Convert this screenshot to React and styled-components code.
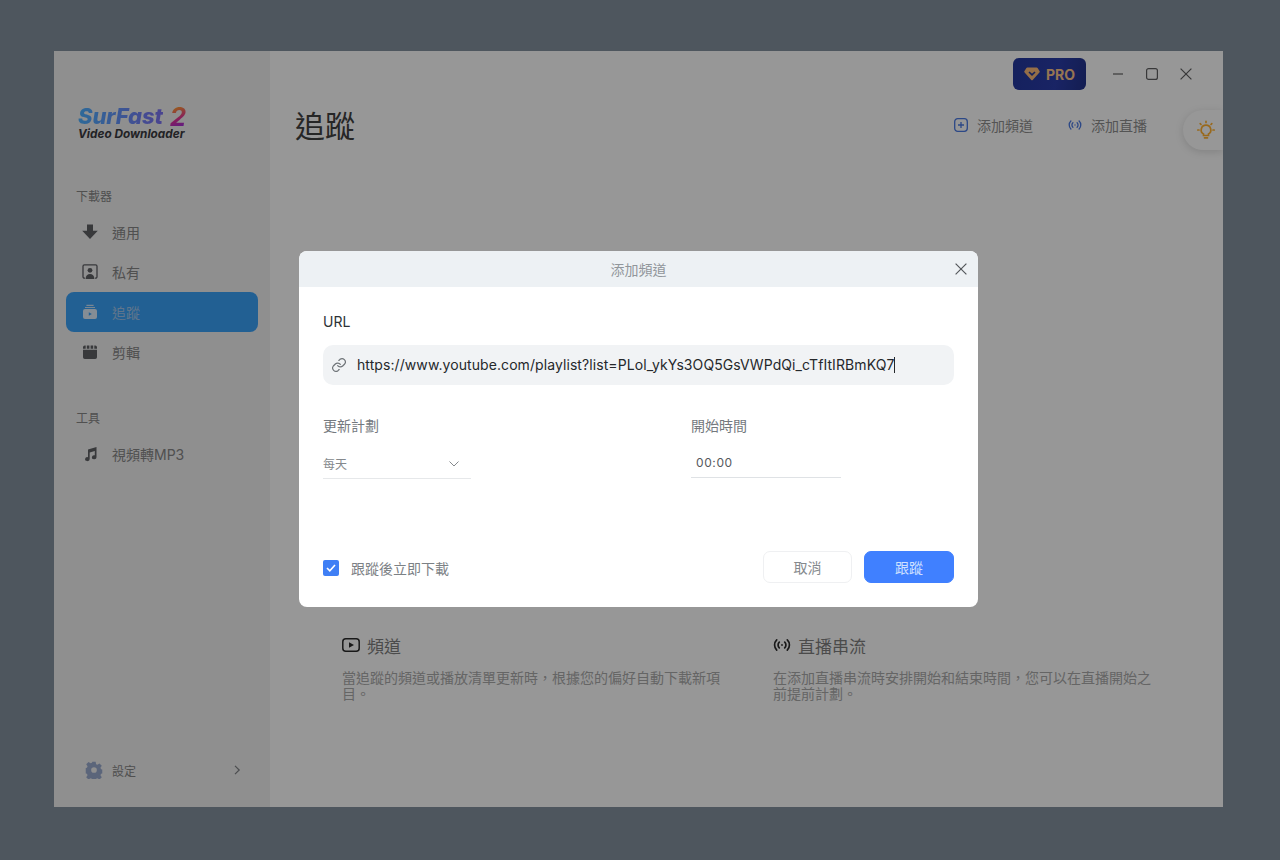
import React from "react";
import styled, { createGlobalStyle } from "styled-components";

const FONT = `Inter, "Noto Sans CJK TC", sans-serif`;

const Global = createGlobalStyle`
  html, body { margin: 0; padding: 0; background: #4e565e; }
  body { font-family: ${FONT}; }
  * { box-sizing: border-box; }
`;

const Page = styled.div`
  width: 1280px;
  height: 860px;
  padding: 51px 57px 53px 54px;
`;

const Win = styled.div`
  position: relative;
  display: flex;
  height: 100%;
  overflow: hidden;
  background: #fcfcfc;
`;

const Sidebar = styled.aside`
  width: 216px;
  flex: none;
  display: flex;
  flex-direction: column;
  padding: 0 12px;
  background: #eeeeef;
`;

const Logo = styled.div`
  margin: 54px 0 0 12px;
  height: 36px;
  font-style: italic;
  font-weight: 700;
  font-family: Inter, sans-serif;
`;

const LogoTop = styled.div`
  display: flex;
  align-items: center;
  gap: 7px;
  height: 23px;
  font-size: 22px;
  line-height: 23px;
  letter-spacing: -0.1px;
`;

const LogoName = styled.span`
  font-weight: 800;
  background: linear-gradient(90deg, #4cb0ff, #7c70f0);
  -webkit-background-clip: text;
  background-clip: text;
  color: transparent;
`;

const LogoTwo = styled.span`
  font-size: 26px;
  font-weight: 700;
  background: linear-gradient(160deg, #ff9a30 15%, #e0309a 60%, #8a30f0);
  -webkit-background-clip: text;
  background-clip: text;
  color: transparent;
`;

const LogoSub = styled.div`
  font-size: 11.8px;
  line-height: 13px;
  color: #3a3a3e;
`;

const SectionLabel = styled.div`
  margin: ${({ $top }) => $top}px 0 6px 10px;
  font-size: 12px;
  line-height: 18px;
  color: #858585;
`;

const NavItem = styled.div`
  display: flex;
  align-items: center;
  gap: 14px;
  height: 40px;
  padding-left: 16px;
  border-radius: 8px;
  font-size: 14px;
  color: ${({ $active }) => ($active ? "#a0c4ea" : "#858585")};
  background: ${({ $active }) => ($active ? "#39a0f5" : "transparent")};
  svg { flex: none; }
`;

const SettingsRow = styled.div`
  margin-top: auto;
  margin-bottom: 27px;
  display: flex;
  align-items: center;
  height: 20px;
  padding: 0 16px 0 19px;
  font-size: 12px;
  color: #858585;
`;

const SettingsLabel = styled.span`
  margin-left: 9px;
  flex: 1;
`;

const Main = styled.main`
  flex: 1;
  min-width: 0;
  display: flex;
  flex-direction: column;
`;

const TopBar = styled.div`
  display: flex;
  justify-content: flex-end;
  align-items: center;
  height: 32px;
  margin-top: 7px;
  padding-right: 28px;
`;

const ProButton = styled.div`
  display: flex;
  align-items: center;
  gap: 6px;
  width: 73px;
  height: 32px;
  padding-left: 11px;
  margin-right: 23px;
  border-radius: 6px;
  background: linear-gradient(100deg, #23379c, #2a3ca8 60%, #213288);
  font-size: 14px;
  font-weight: 700;
  color: #fbc389;
`;

const WinControl = styled.div`
  display: flex;
  justify-content: center;
  width: 18px;
  margin-left: ${({ $gap }) => $gap}px;
  color: #5e5e60;
`;

const Header = styled.div`
  display: flex;
  align-items: center;
  height: 40px;
  margin-top: 16px;
  padding: 0 76px 0 25px;
`;

const Title = styled.h1`
  flex: 1;
  margin: 0;
  font-size: 30px;
  line-height: 40px;
  font-weight: 400;
  color: #404040;
`;

const HeaderAction = styled.div`
  display: flex;
  align-items: center;
  gap: 9px;
  margin-left: ${({ $gap }) => $gap}px;
  padding-bottom: 2px;
  font-size: 14px;
  color: #8c8c8c;
`;

const BulbTab = styled.div`
  position: absolute;
  top: 59px;
  right: 0;
  display: flex;
  align-items: center;
  justify-content: flex-end;
  width: 40px;
  height: 40px;
  padding-right: 7px;
  border-radius: 20px 0 0 20px;
  background: #fcfcfc;
  box-shadow: 0 2px 8px rgba(0, 0, 0, 0.14);
`;

const Features = styled.div`
  margin-top: auto;
  display: grid;
  grid-template-columns: 382px 382px;
  column-gap: 49px;
  padding: 0 0 105px 72px;
`;

const FeatureHead = styled.div`
  display: flex;
  align-items: center;
  gap: 7px;
  height: 24px;
  font-size: 17px;
  color: #7e7e7e;
  margin-bottom: 13px;
`;

const FeatureText = styled.p`
  margin: 0;
  font-size: 14px;
  line-height: 16px;
  color: #a8a8a8;
`;

const Scrim = styled.div`
  position: absolute;
  inset: 0;
  display: flex;
  align-items: center;
  justify-content: center;
  background: rgba(0, 0, 0, 0.4);
`;

const Modal = styled.div`
  width: 679px;
  height: 356px;
  display: flex;
  flex-direction: column;
  overflow: hidden;
  border-radius: 8px;
  background: #fff;
`;

const ModalHead = styled.div`
  position: relative;
  flex: none;
  height: 36px;
  display: flex;
  align-items: center;
  justify-content: center;
  padding-bottom: 1px;
  background: #edf1f4;
  font-size: 14px;
  color: #91969b;
`;

const CloseBtn = styled.div`
  position: absolute;
  right: 11px;
  top: 12px;
  display: flex;
  color: #55595d;
`;

const ModalBody = styled.div`
  flex: 1;
  display: flex;
  flex-direction: column;
  padding: 26px 24px 24px;
`;

const UrlLabel = styled.div`
  font-size: 14px;
  line-height: 18px;
  color: #2e3236;
`;

const UrlField = styled.div`
  display: flex;
  align-items: center;
  gap: 10px;
  height: 40px;
  margin-top: 14px;
  padding: 0 0 1px 8px;
  border-radius: 10px;
  background: #f1f3f5;
  font-size: 14px;
  letter-spacing: 0.08px;
  color: #25282b;
  white-space: nowrap;
`;

const Caret = styled.span`
  display: inline-block;
  width: 1px;
  height: 16px;
  vertical-align: -3px;
  background: #25282b;
`;

const FieldRow = styled.div`
  display: grid;
  grid-template-columns: 148px 150px;
  column-gap: 220px;
  margin-top: 32px;
`;

const FieldLabel = styled.div`
  font-size: 14px;
  line-height: 18px;
  color: #74797e;
`;

const SelectBox = styled.div`
  display: flex;
  align-items: center;
  justify-content: space-between;
  height: 34px;
  margin-top: 10px;
  padding: 4px 12px 0 0;
  border-bottom: 1px solid #e6e8ea;
  font-size: 12px;
  color: #85898d;
`;

const TimeBox = styled.div`
  display: flex;
  align-items: center;
  height: 33px;
  margin-top: 10px;
  padding: 2px 0 0 5px;
  border-bottom: 1px solid #dfe2e5;
  font-size: 12px;
  letter-spacing: 0.6px;
  color: #55595d;
`;

const ModalFoot = styled.div`
  margin-top: auto;
  display: flex;
  align-items: center;
`;

const Check = styled.div`
  display: flex;
  align-items: center;
  justify-content: center;
  width: 16px;
  height: 16px;
  border-radius: 2px;
  margin-top: 2px;
  background: #3f7ff5;
`;

const CheckLabel = styled.span`
  flex: 1;
  margin-left: 12px;
  padding-top: 2px;
  font-size: 14px;
  color: #7c8185;
`;

const Btn = styled.div`
  display: flex;
  align-items: center;
  justify-content: center;
  height: 32px;
  width: ${({ $primary }) => ($primary ? 90 : 89)}px;
  margin-left: ${({ $primary }) => ($primary ? 12 : 0)}px;
  border-radius: 7px;
  font-size: 14px;
  color: ${({ $primary }) => ($primary ? "#cfe0ff" : "#85898d")};
  background: ${({ $primary }) => ($primary ? "#4080ff" : "#fff")};
  border: 1px solid ${({ $primary }) => ($primary ? "#4080ff" : "#eff0f2")};
`;

const Dark = "#5e5f63";

const ArrowIcon = () => (
  <svg width="16" height="16" viewBox="0 0 16 16" fill={Dark}>
    <path d="M5 .5h6v6.200h4.800L8 15 .2 6.700H5z" />
  </svg>
);

const PrivateIcon = () => (
  <svg width="16" height="16" viewBox="0 0 16 16" fill="none">
    <path d="M3 14.200H2.400A1.400 1.400 0 0 1 1 12.800V2.200A1.400 1.400 0 0 1 2.400.8h11.200A1.400 1.400 0 0 1 15 2.200v10.600a1.400 1.400 0 0 1-1.400 1.400H13" stroke={Dark} strokeWidth="1.300" />
    <circle cx="8" cy="6.300" r="2.400" fill={Dark} />
    <path d="M3.600 15c0-3 2-4.900 4.400-4.900s4.400 1.900 4.400 4.900z" fill={Dark} />
  </svg>
);

const FollowIcon = () => (
  <svg width="16" height="16" viewBox="0 0 16 16">
    <path d="M4.400.8h7.200v1.200H4.400zM3 2.900h10v1.200H3z" fill="#c8dff5" />
    <rect x="1" y="5" width="14" height="10" rx="2" fill="#dcebf9" />
    <path d="M6.800 8.200l3 1.800-3 1.800z" fill="#39a0f5" />
  </svg>
);

const ClipIcon = () => (
  <svg width="16" height="16" viewBox="0 0 16 16" fill={Dark}>
    <path d="M1 5.800h14v7.400a1.800 1.800 0 0 1-1.800 1.800H2.800A1.800 1.800 0 0 1 1 13.200z" />
    <path d="M2.800 1.500h.9v3.300H1V3.300a1.800 1.800 0 0 1 1.800-1.800zM4.800 1.500h2.600v3.300H4.800zM8.600 1.500h2.600v3.300H8.600zM12.300 1.500h.9A1.800 1.800 0 0 1 15 3.300v1.500h-2.700z" />
  </svg>
);

const MusicIcon = () => (
  <svg width="16" height="16" viewBox="0 0 16 16" fill={Dark}>
    <path d="M6 3.400 14.500 1v10.200a2.300 2 0 1 1-1.700-1.900V5L7.700 6.400v6.700a2.300 2 0 1 1-1.700-1.900z" />
  </svg>
);

const GearIcon = () => (
  <svg width="18" height="18" viewBox="0 0 24 24" fill="#98a8cc">
    <path fillRule="evenodd" d="M9.800 1h4.400l.6 3.200 1.700.8 2.800-1.700 3.100 3.100-1.800 2.700.8 1.800 1.600.3v5.600l-1.600.3-.8 1.800 1.800 2.700-3.100 3.100-2.800-1.800-1.700.8-.6 3.200H9.800l-.6-3.200-1.700-.8-2.800 1.800-3.100-3.100 1.800-2.700-.8-1.800-1.600-.3V9.200l1.600-.3.800-1.800-1.800-2.700 3.100-3.100 2.800 1.700 1.700-.8zM12 8.200a3.800 3.800 0 1 0 0 7.600 3.800 3.800 0 0 0 0-7.600z" />
  </svg>
);

const Chevron = ({ size = 10, color = "#7e8084" }) => (
  <svg width={size} height={size} viewBox="0 0 10 10" fill="none" stroke={color} strokeWidth="1.200">
    <path d="M3 .8 7.200 5 3 9.200" />
  </svg>
);

const ChevronDown = () => (
  <svg width="10" height="6" viewBox="0 0 10 6" fill="none" stroke="#85898d" strokeWidth="1">
    <path d="M.5.5 5 5 9.500.5" />
  </svg>
);

const GemIcon = () => (
  <svg width="16" height="14" viewBox="0 0 16 14">
    <path d="M3.400.5h9.200a1.200 1.200 0 0 1 1 .5l1.900 2.900a1.200 1.200 0 0 1-.1 1.500L8.700 13a1 1 0 0 1-1.400 0L.6 5.400a1.200 1.200 0 0 1-.1-1.500L2.400 1a1.200 1.200 0 0 1 1-.5z" fill="#f8b878" />
    <path d="M5 5l3 2.800L11 5" fill="none" stroke="#23379c" strokeWidth="1.600" />
  </svg>
);

const PlusBoxIcon = () => (
  <svg width="14" height="14" viewBox="0 0 14 14" fill="none" stroke="#4a78e0" strokeWidth="1.300">
    <rect x=".7" y=".7" width="12.600" height="12.600" rx="3" />
    <path d="M7 4v6M4 7h6" />
  </svg>
);

const LiveIcon = ({ color, size = 14 }) => (
  <svg width={size} height={size} viewBox="0 0 16 16" fill="none" stroke={color} strokeWidth="1.500" strokeLinecap="round">
    <path d="M3.300 3.500a6.300 6.300 0 0 0 0 9M12.700 3.500a6.300 6.300 0 0 1 0 9M5.600 5.500a3.400 3.400 0 0 0 0 5M10.400 5.500a3.400 3.400 0 0 1 0 5" />
    <circle cx="8" cy="8" r=".8" fill={color} stroke="none" />
  </svg>
);

const BulbIcon = () => (
  <svg width="20" height="20" viewBox="0 0 20 20" fill="none" stroke="#ffb030" strokeWidth="1.700" strokeLinecap="round">
    <path d="M10 5.200a4.800 4.800 0 0 0-2.500 8.900v1.400h5v-1.400A4.800 4.800 0 0 0 10 5.200z" />
    <path d="M8.500 17.800h3M10 1.300v1.200M4.200 3.700l.8.800M15.800 3.700l-.8.800M1.800 10h1.200M17 10h1.200" />
  </svg>
);

const PlayBoxIcon = () => (
  <svg width="18" height="14" viewBox="0 0 18 14" fill="none">
    <rect x=".8" y=".8" width="16.400" height="12.400" rx="3" stroke="#2a2a2a" strokeWidth="1.500" />
    <path d="M7 4.300 12 7l-5 2.700z" fill="#2a2a2a" />
  </svg>
);

const LinkIcon = () => (
  <svg width="16" height="16" viewBox="0 0 24 24" fill="none" stroke="#6f7478" strokeWidth="1.800" strokeLinecap="round" strokeLinejoin="round">
    <path d="M10 13a5 5 0 0 0 7.500.5l3-3a5 5 0 0 0-7-7l-1.700 1.700" />
    <path d="M14 11a5 5 0 0 0-7.500-.5l-3 3a5 5 0 0 0 7 7l1.700-1.700" />
  </svg>
);

const CloseIcon = ({ size = 12, color = "currentColor" }) => (
  <svg width={size} height={size} viewBox="0 0 12 12" fill="none" stroke={color} strokeWidth="1.200">
    <path d="M.6.6l10.800 10.800M11.400.6.6 11.400" />
  </svg>
);

const MinIcon = () => (
  <svg width="10" height="2" viewBox="0 0 10 2"><path d="M0 1h10" stroke="currentColor" strokeWidth="1.200" /></svg>
);

const MaxIcon = () => (
  <svg width="12" height="12" viewBox="0 0 12 12" fill="none" stroke="currentColor" strokeWidth="1.200">
    <rect x=".6" y=".6" width="10.800" height="10.800" rx="2" />
  </svg>
);

const CheckMark = () => (
  <svg width="10" height="8" viewBox="0 0 10 8" fill="none" stroke="#fff" strokeWidth="1.600">
    <path d="M1 4l2.800 2.800L9 1" />
  </svg>
);

const App = () => (
  <>
    <Global />
    <Page>
      <Win>
        <Sidebar>
          <Logo>
            <LogoTop>
              <LogoName>SurFast</LogoName>
              <LogoTwo>2</LogoTwo>
            </LogoTop>
            <LogoSub>Video Downloader</LogoSub>
          </Logo>
          <SectionLabel $top={47}>下載器</SectionLabel>
          <NavItem><ArrowIcon />通用</NavItem>
          <NavItem><PrivateIcon />私有</NavItem>
          <NavItem $active><FollowIcon />追蹤</NavItem>
          <NavItem><ClipIcon />剪輯</NavItem>
          <SectionLabel $top={38}>工具</SectionLabel>
          <NavItem><MusicIcon />視頻轉MP3</NavItem>
          <SettingsRow>
            <GearIcon />
            <SettingsLabel>設定</SettingsLabel>
            <Chevron />
          </SettingsRow>
        </Sidebar>
        <Main>
          <TopBar>
            <ProButton><GemIcon />PRO</ProButton>
            <WinControl><MinIcon /></WinControl>
            <WinControl $gap={16}><MaxIcon /></WinControl>
            <WinControl $gap={16}><CloseIcon /></WinControl>
          </TopBar>
          <Header>
            <Title>追蹤</Title>
            <HeaderAction><PlusBoxIcon />添加頻道</HeaderAction>
            <HeaderAction $gap={35}><LiveIcon color="#4a78e0" />添加直播</HeaderAction>
          </Header>
          <Features>
            <div>
              <FeatureHead><PlayBoxIcon />頻道</FeatureHead>
              <FeatureText>當追蹤的頻道或播放清單更新時，根據您的偏好自動下載新項目。</FeatureText>
            </div>
            <div>
              <FeatureHead><LiveIcon color="#2a2a2a" size={18} />直播串流</FeatureHead>
              <FeatureText>在添加直播串流時安排開始和結束時間，您可以在直播開始之前提前計劃。</FeatureText>
            </div>
          </Features>
        </Main>
        <BulbTab><BulbIcon /></BulbTab>
        <Scrim>
          <Modal>
            <ModalHead>
              添加頻道
              <CloseBtn><CloseIcon /></CloseBtn>
            </ModalHead>
            <ModalBody>
              <UrlLabel>URL</UrlLabel>
              <UrlField>
                <LinkIcon />
                <span>https://www.youtube.com/playlist?list=PLol_ykYs3OQ5GsVWPdQi_cTfItIRBmKQ7<Caret /></span>
              </UrlField>
              <FieldRow>
                <div>
                  <FieldLabel>更新計劃</FieldLabel>
                  <SelectBox>每天<ChevronDown /></SelectBox>
                </div>
                <div>
                  <FieldLabel>開始時間</FieldLabel>
                  <TimeBox>00:00</TimeBox>
                </div>
              </FieldRow>
              <ModalFoot>
                <Check><CheckMark /></Check>
                <CheckLabel>跟蹤後立即下載</CheckLabel>
                <Btn>取消</Btn>
                <Btn $primary>跟蹤</Btn>
              </ModalFoot>
            </ModalBody>
          </Modal>
        </Scrim>
      </Win>
    </Page>
  </>
);

export default App;
